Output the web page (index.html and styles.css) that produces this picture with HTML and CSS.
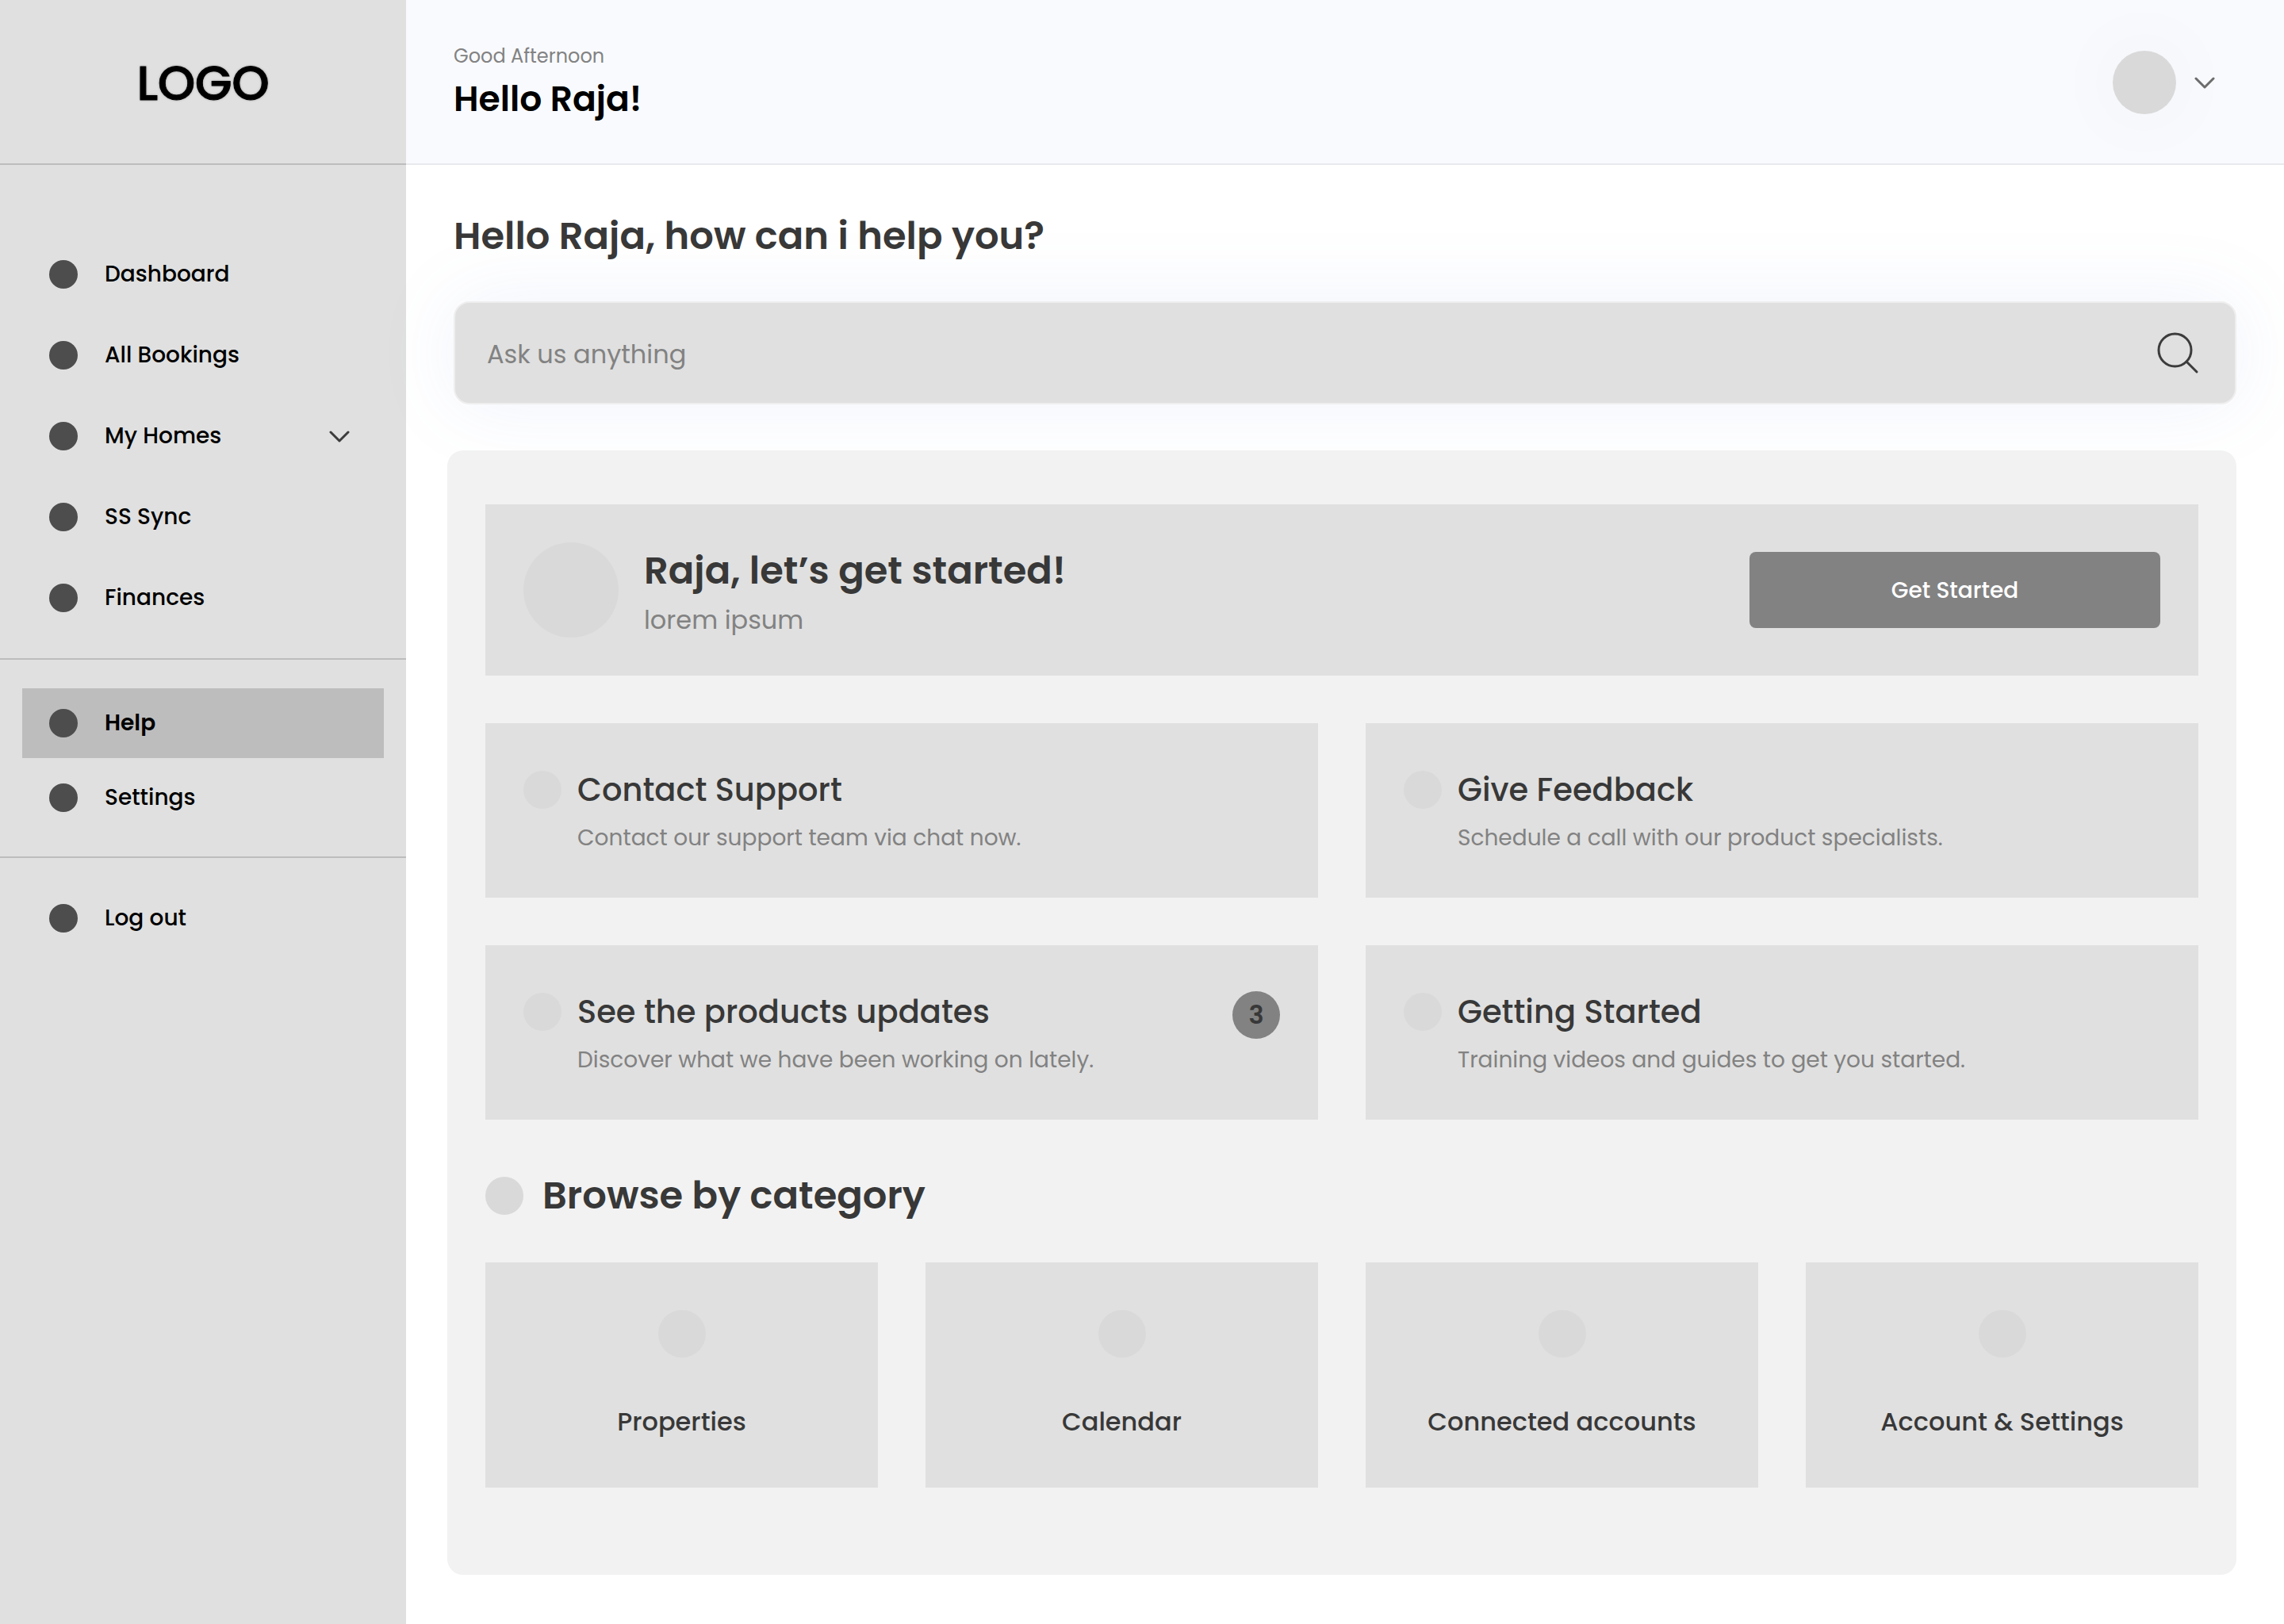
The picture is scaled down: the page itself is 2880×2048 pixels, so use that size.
FILE: index.html
```html
<!DOCTYPE html>
<html lang="en">
<head>
	<meta charset="utf-8">
	<title>Help</title>
	<link rel="stylesheet" href="styles.css">
</head>
<body>
	<aside class="sidebar">
		<div class="logo">LOGO</div>
		<nav>
			<ul class="menu menu-main">
				<li><a href="#"><span class="dot"></span>Dashboard</a></li>
				<li><a href="#"><span class="dot"></span>All Bookings</a></li>
				<li>
					<a href="#"><span class="dot"></span>My Homes
						<svg class="chevron" width="28" height="16" viewBox="0 0 28 16"><path d="M3 3l11 11L25 3"/></svg>
					</a>
				</li>
				<li><a href="#"><span class="dot"></span>SS Sync</a></li>
				<li><a href="#"><span class="dot"></span>Finances</a></li>
			</ul>
			<ul class="menu menu-help">
				<li><a href="#" class="active"><span class="dot"></span>Help</a></li>
				<li><a href="#"><span class="dot"></span>Settings</a></li>
			</ul>
			<ul class="menu menu-exit">
				<li><a href="#"><span class="dot"></span>Log out</a></li>
			</ul>
		</nav>
	</aside>

	<div class="page">
		<header class="header">
			<div>
				<p class="greeting">Good Afternoon</p>
				<p class="user">Hello Raja!</p>
			</div>
			<button type="button" class="profile" aria-label="Profile">
				<span class="avatar"></span>
				<svg class="chevron" width="28" height="16" viewBox="0 0 28 16"><path d="M3 3l11 11L25 3"/></svg>
			</button>
		</header>

		<main class="content">
			<h1>Hello Raja, how can i help you?</h1>

			<form class="search">
				<input type="text" name="question" placeholder="Ask us anything" aria-label="Ask us anything">
				<button type="button" aria-label="Search">
					<svg width="56" height="56" viewBox="0 0 56 56"><circle cx="24.5" cy="24.5" r="20.5"/><path d="M39 39l13 13"/></svg>
				</button>
			</form>

			<div class="panel">
				<section class="banner">
					<span class="circle circle-big"></span>
					<div class="banner-text">
						<h2>Raja, let’s get started!</h2>
						<p>lorem ipsum</p>
					</div>
					<button type="button" class="start">Get Started</button>
				</section>

				<section class="cards">
					<article class="card">
						<span class="circle"></span>
						<div>
							<h3>Contact Support</h3>
							<p>Contact our support team via chat now.</p>
						</div>
					</article>
					<article class="card">
						<span class="circle"></span>
						<div>
							<h3>Give Feedback</h3>
							<p>Schedule a call with our product specialists.</p>
						</div>
					</article>
					<article class="card">
						<span class="circle"></span>
						<div>
							<h3>See the products updates</h3>
							<p>Discover what we have been working on lately.</p>
						</div>
						<span class="badge">3</span>
					</article>
					<article class="card">
						<span class="circle"></span>
						<div>
							<h3>Getting Started</h3>
							<p>Training videos and guides to get you started.</p>
						</div>
					</article>
				</section>

				<div class="browse">
					<span class="circle"></span>
					<h2>Browse by category</h2>
				</div>
				<section class="categories">
					<a href="#" class="category"><span class="circle circle-mid"></span>Properties</a>
					<a href="#" class="category"><span class="circle circle-mid"></span>Calendar</a>
					<a href="#" class="category"><span class="circle circle-mid"></span>Connected accounts</a>
					<a href="#" class="category"><span class="circle circle-mid"></span>Account &amp; Settings</a>
				</section>
			</div>
		</main>
	</div>
</body>
</html>
```
FILE: styles.css
```css
*{
	box-sizing: border-box;
	margin: 0;
	padding: 0;
}
body{
	display: flex;
	min-height: 100vh;
	font-family: Poppins, Inter, "Open Sans", sans-serif;
	color: #383838;
	background-color: #fff;
}
a{
	color: inherit;
	text-decoration: none;
}
button, input{
	font: inherit;
	border: none;
	background: none;
}
button{
	cursor: pointer;
}
ul{
	list-style: none;
}
svg{
	fill: none;
	stroke: #3c3c3c;
	stroke-width: 3px;
	stroke-linecap: round;
	stroke-linejoin: round;
}

/* sidebar */
.sidebar{
	flex: 0 0 512px;
	background-color: #e0e0e0;
	color: #000;
}
.logo{
	display: flex;
	align-items: center;
	justify-content: center;
	height: 208px;
	padding-top: 4px;
	border-bottom: 2px solid #bdbdbd;
	font-size: 60px;
	font-weight: 500;
	-webkit-text-stroke: 1px #000;
	text-shadow: 0 0 3px rgba(0, 0, 0, 0.5);
}
.menu{
	display: flex;
	flex-direction: column;
	padding: 32px 28px;
}
.menu-main{
	gap: 14px;
	padding-top: 94px;
}
.menu-help{
	gap: 6px;
	padding-top: 36px;
	padding-bottom: 30px;
	border-top: 2px solid #bdbdbd;
	border-bottom: 2px solid #bdbdbd;
}
.menu a{
	display: flex;
	align-items: center;
	height: 88px;
	padding: 0 42px 0 34px;
	font-size: 28px;
	font-weight: 500;
}
.menu .active{
	background-color: #bdbdbd;
	font-weight: 600;
}
.menu .chevron{
	margin-left: auto;
}
.dot{
	width: 36px;
	height: 36px;
	margin-right: 34px;
	border-radius: 50%;
	background-color: #4d4d4d;
}

/* top bar */
.page{
	flex: 1;
	min-width: 0;
}
.header{
	display: flex;
	align-items: center;
	justify-content: space-between;
	height: 208px;
	padding: 2px 86px 0 60px;
	border-bottom: 2px solid #e8e9ec;
	background-color: #f9fafe;
}
.greeting{
	margin-bottom: 6px;
	font-size: 24px;
	line-height: 36px;
	color: #828282;
}
.user{
	font-size: 44px;
	font-weight: 600;
	line-height: 60px;
	color: #000;
}
.profile{
	display: flex;
	align-items: center;
	gap: 22px;
}
.profile .chevron{
	stroke: #6c6c6c;
}
.avatar{
	width: 80px;
	height: 80px;
	border-radius: 50%;
	background-color: #d9d9d9;
	box-shadow: 0 0 100px rgba(0, 0, 0, 0.05);
}

/* content */
.content{
	padding: 54px 60px 62px 52px;
}
h1, h2{
	font-size: 48px;
	font-weight: 600;
	line-height: 72px;
}
h1{
	margin-left: 8px;
}
.search{
	display: flex;
	align-items: center;
	height: 130px;
	margin: 46px 0 58px 8px;
	padding: 0 44px 0 40px;
	border: 2px solid #eee;
	border-radius: 20px;
	background-color: #e0e0e0;
	box-shadow: 0 0 100px rgba(110, 140, 220, 0.1);
}
.search input{
	flex: 1;
	min-width: 0;
	height: 100%;
	padding-top: 4px;
	font-size: 32px;
	outline: none;
}
.search input::placeholder{
	color: #828282;
	opacity: 1;
}
.search button{
	display: flex;
}
.panel{
	padding: 68px 48px 110px;
	border-radius: 20px;
	background-color: #f2f2f2;
}
.circle{
	flex: none;
	width: 48px;
	height: 48px;
	border-radius: 50%;
	background-color: #d9d9d9;
}
.circle-mid{
	width: 60px;
	height: 60px;
}
.circle-big{
	width: 120px;
	height: 120px;
}

.banner{
	display: flex;
	align-items: center;
	gap: 32px;
	padding: 48px;
	background-color: #e0e0e0;
}
.banner-text{
	flex: 1;
}
.banner h2{
	margin-bottom: 4px;
}
.banner p{
	font-size: 32px;
	line-height: 44px;
	color: #828282;
}
.start{
	width: 518px;
	height: 96px;
	padding-top: 2px;
	border-radius: 8px;
	background-color: #828282;
	color: #fff;
	font-size: 28px;
	font-weight: 500;
}

.cards{
	display: grid;
	grid-template-columns: 1fr 1fr;
	gap: 60px;
	margin: 60px 0;
}
.card{
	display: flex;
	gap: 20px;
	padding: 54px 48px;
	background-color: #e0e0e0;
}
.card .circle{
	margin-top: 6px;
}
.card h3{
	margin-bottom: 10px;
	font-size: 40px;
	font-weight: 500;
	line-height: 60px;
}
.card p{
	font-size: 28px;
	line-height: 42px;
	color: #828282;
}
.badge{
	width: 60px;
	height: 60px;
	margin: 4px 0 0 auto;
	border-radius: 50%;
	background-color: #828282;
	font-size: 32px;
	font-weight: 600;
	line-height: 60px;
	text-align: center;
}

.browse{
	display: flex;
	align-items: center;
	gap: 24px;
	margin-bottom: 48px;
}
.categories{
	display: grid;
	grid-template-columns: repeat(4, 1fr);
	gap: 60px;
}
.category{
	display: flex;
	flex-direction: column;
	align-items: center;
	gap: 57px;
	padding: 60px 20px 59px;
	background-color: #e0e0e0;
	font-size: 32px;
	font-weight: 500;
	line-height: 48px;
}
```
